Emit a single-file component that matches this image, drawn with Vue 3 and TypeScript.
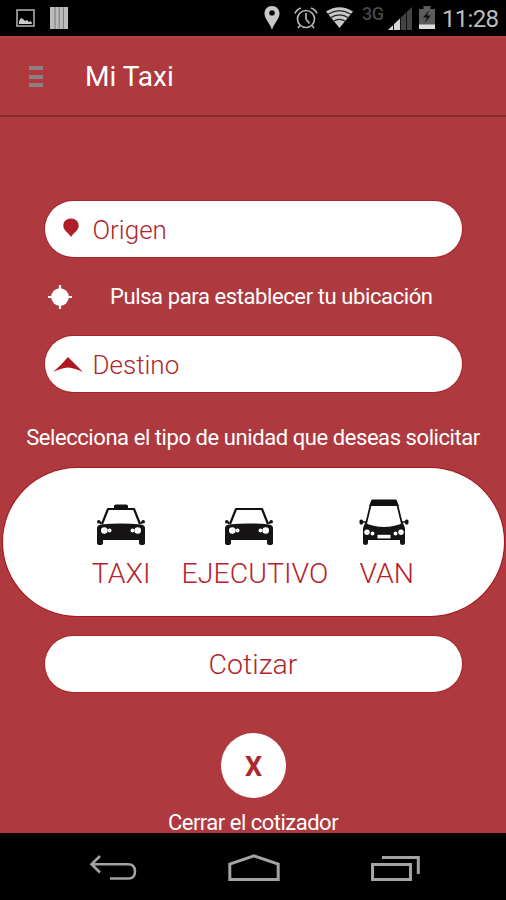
<script setup lang="ts">
interface Unit {
  id: 'taxi' | 'exec' | 'van'
  label: string
}

const units: Unit[] = [
  { id: 'taxi', label: 'TAXI' },
  { id: 'exec', label: 'EJECUTIVO' },
  { id: 'van', label: 'VAN' },
]
</script>

<template>
  <div class="screen">
    <div class="status">
      <svg class="s-image" width="19" height="18" viewBox="0 0 19 18">
        <rect x="1" y="1" width="17" height="16" fill="none" stroke="#aaa" stroke-width="1.6" />
        <path d="M3 15v-3l2-3 2 1 2 2 2-1 2 2 2-1 1 3z" fill="#ccc" />
      </svg>
      <svg class="s-bars" width="18" height="22" viewBox="0 0 18 22">
        <rect width="18" height="22" fill="#bcbcbc" />
        <path d="M5 0v22M9.2 0v22M13.4 0v22" stroke="#777" stroke-width="1" />
      </svg>
      <svg class="s-pin" width="16" height="24" viewBox="0 0 16 24">
        <path fill="#c8c8c8" fill-rule="evenodd" d="M8 0C3.5 0 .5 3.300.5 7.500.5 13 6 17 8 24 10 17 15.500 13 15.500 7.500 15.500 3.300 12.500 0 8 0zM8 4.200a2.700 2.700 0 1 1 0 5.400 2.700 2.700 0 0 1 0-5.400z" />
      </svg>
      <svg class="s-alarm" width="24" height="22" viewBox="0 0 24 22" fill="none" stroke="#b5b5b5" stroke-width="1.700">
        <circle cx="12" cy="12" r="8.500" />
        <path d="M12 6v6l3.500 4.500M1 6.500Q2.500 2.500 7 1M23 6.500Q21.500 2.500 17 1M6 18.500l-2 2.500M18 18.500l2 2.500" />
      </svg>
      <svg class="s-wifi" width="27" height="21" viewBox="0 0 27 21">
        <path d="M0 4.500Q13.500-4 27 4.500L13.500 21z" fill="#c8c8c8" />
        <path d="M2 7.200Q13.500 0 25 7.200M4.500 10.800Q13.500 5 22.500 10.800M7.500 14.300Q13.500 10.500 19.500 14.300" fill="none" stroke="#222" stroke-width="1.100" />
      </svg>
      <span class="s-net">3G</span>
      <svg class="s-signal" width="24" height="23" viewBox="0 0 24 23">
        <path d="M0 23L24 0v23z" fill="#444" />
        <path d="M0 23L12 11.500V23z" fill="#d5d5d5" />
        <path d="M5.500 17v6M12.500 10v13M18.500 4v19" stroke="#111" stroke-width="1" />
      </svg>
      <svg class="s-battery" width="16" height="23" viewBox="0 0 16 23">
        <path d="M4.500 0h7v3H16v20H0V3h4.500z" fill="#5c5c5c" />
        <path d="M0 18.500h16V23H0z" fill="#ddd" />
        <path d="M10.500 4L4 11.500h4L5.500 17 12 9.500H8z" fill="#111" />
      </svg>
      <span class="s-time">11:28</span>
    </div>

    <header class="bar">
      <span class="menu"><i></i><i></i><i></i></span>
      <h1>Mi Taxi</h1>
    </header>

    <main class="content">
      <div class="pill field">
        <svg class="f-icon" width="30" height="22" viewBox="0 0 30 22">
          <path d="M18 .5C13.500.5 10.300 3.600 10.300 7.700 10.300 12.800 16 15 18 19 20 15 25.700 12.800 25.700 7.700 25.700 3.600 22.500.5 18 .5z" fill="#ae1f27" />
        </svg>
        <span>Origen</span>
      </div>

      <div class="locate">
        <svg width="24" height="26" viewBox="0 0 24 26">
          <circle cx="12" cy="13" r="8.800" fill="#fff" />
          <path d="M12 1v24M0 13h24" stroke="#fff" stroke-width="2.200" />
        </svg>
        <span>Pulsa para establecer tu ubicación</span>
      </div>

      <div class="pill field">
        <svg class="f-icon" width="30" height="22" viewBox="0 0 30 22">
          <path d="M15 4L30 19Q22 15 15 14.500 8 15 0 19 8 12.500 15 4z" fill="#ae1720" />
        </svg>
        <span>Destino</span>
      </div>

      <p class="prompt">Selecciona el tipo de unidad que deseas solicitar</p>

      <div class="units">
        <div v-for="u in units" :key="u.id" class="unit" :class="u.id">
          <svg width="50" height="48" viewBox="0 0 50 48">
            <template v-if="u.id !== 'van'">
              <path v-if="u.id === 'taxi'" d="M18 11.500V9q0-1.500 2-1.500h10q2 0 2 1.500v2.500z" fill="#111" />
              <path d="M6 27L12 12H38L44 27" fill="none" stroke="#111" stroke-width="2.200" stroke-linejoin="round" />
              <path d="M1 31Q1 28 5 27.500 25 25.500 45 27.500 49 28 49 31V46q0 2-3 2t-3-2V43H7v3q0 2-3 2t-3-2z" fill="#151313" />
              <path d="M2.500 24.500l3 2M47.500 24.500l-3 2" stroke="#111" stroke-width="2" />
              <circle cx="2.800" cy="24.800" r="1.800" fill="#111" />
              <circle cx="47.200" cy="24.800" r="1.800" fill="#111" />
              <g fill="#fff">
                <circle cx="8.300" cy="33.500" r="3.300" />
                <circle cx="13.500" cy="33.500" r="2" />
                <circle cx="36.500" cy="33.500" r="2" />
                <circle cx="41.700" cy="33.500" r="3.300" />
              </g>
            </template>
            <template v-else>
              <path d="M11.500 8.500L7 27M38.500 8.500L43 27" stroke="#111" stroke-width="1.800" />
              <path d="M12 4q0-1.500 1.500-1.500h23Q38 2.500 38 4l2 5H10z" fill="#111" />
              <path d="M6 26Q25 34 44 26l2 5V46q0 2-2.500 2T41 46V43H9v3q0 2-2.500 2T4 46V31z" fill="#151313" />
              <path d="M2 25h5M43 25h5" stroke="#111" stroke-width="1.500" />
              <rect x=".5" y="22.500" width="3.500" height="5" rx="1.500" fill="#111" />
              <rect x="46" y="22.500" width="3.500" height="5" rx="1.500" fill="#111" />
              <g fill="#fff">
                <circle cx="8" cy="35.200" r="2.700" />
                <circle cx="13.500" cy="36.500" r="1.900" />
                <circle cx="36.500" cy="36.500" r="1.900" />
                <circle cx="42" cy="35.200" r="2.700" />
                <rect x="18.500" y="37.800" width="13" height="3.600" />
              </g>
            </template>
          </svg>
          <span>{{ u.label }}</span>
        </div>
      </div>

      <button class="pill quote">Cotizar</button>
      <button class="close">X</button>
      <p class="close-label">Cerrar el cotizador</p>
    </main>

    <nav class="nav">
      <svg width="48" height="28" viewBox="0 0 48 28" fill="none" stroke="#a3a3a3" stroke-width="2.600">
        <path d="M11 2L2.500 10.300 11 18.500M2.500 10.300H39Q46 10.300 46 17.500T39 24.500H21" />
      </svg>
      <svg width="52" height="28" viewBox="0 0 52 28" fill="none" stroke="#a3a3a3" stroke-width="3">
        <path d="M1.800 25.500V10L26 1.800 50.200 10V25.500z" />
      </svg>
      <svg width="49" height="28" viewBox="0 0 49 28" fill="none" stroke="#a3a3a3" stroke-width="3">
        <path d="M1.500 10.500h38v15h-38zM11 3.500H47.300V20" />
      </svg>
    </nav>
  </div>
</template>

<style>
body {
  margin: 0;
  background: #000;
}
</style>

<style scoped>
.screen {
  width: 506px;
  height: 900px;
  display: flex;
  flex-direction: column;
  overflow: hidden;
  background: #ae393f;
  color: #fff;
  font-family: Roboto, "Liberation Sans", sans-serif;
}
svg {
  display: block;
  flex: none;
}
h1,
p {
  margin: 0;
  font-weight: 400;
  white-space: nowrap;
}
button {
  border: 0;
  padding: 0;
  font-family: inherit;
}
.status {
  height: 36px;
  flex: none;
  display: flex;
  align-items: flex-start;
  background: #000;
  box-sizing: border-box;
  padding-left: 16px;
}
.s-image { margin-top: 9px; }
.s-bars { margin: 7px 0 0 15px; }
.s-pin { margin: 6px 0 0 196px; }
.s-alarm { margin: 7px 0 0 14px; }
.s-wifi { margin: 7px 0 0 8px; }
.s-net {
  width: 24px;
  margin: 3px 0 0 9px;
  font-size: 18px;
  font-weight: 500;
  line-height: 21px;
  letter-spacing: -0.5px;
  color: #484848;
}
.s-signal { margin: 7px 0 0 2px; }
.s-battery { margin: 6px 0 0 7px; }
.s-time {
  margin: 4px 0 0 7px;
  font-size: 24px;
  line-height: 30px;
  letter-spacing: -0.7px;
  color: #bdbdbd;
}
.bar {
  height: 81px;
  flex: none;
  box-sizing: border-box;
  border-top: 2px solid #b94046;
  border-bottom: 2px solid #822a2e;
  display: flex;
  align-items: center;
  padding-left: 29px;
}
.menu {
  width: 14px;
  display: flex;
  flex-direction: column;
  gap: 4.500px;
}
.menu i {
  height: 4px;
  background: #8d7f83;
}
.bar h1 {
  margin-left: 42px;
  font-size: 28px;
  line-height: 36px;
}
.content {
  flex: 1;
  min-height: 0;
  display: flex;
  flex-direction: column;
  align-items: center;
  padding-top: 84px;
}
.pill {
  width: 417px;
  height: 56px;
  flex: none;
  box-sizing: border-box;
  border-radius: 28px;
  background: #fff;
  color: #ae272e;
  box-shadow: 0 0 0 1px #a9252c;
}
.field {
  display: flex;
  align-items: center;
  padding-left: 8px;
  font-size: 26px;
  font-weight: 300;
}
.field span { margin-left: 10px; padding-top: 1px; }
.locate {
  width: 506px;
  height: 79px;
  flex: none;
  box-sizing: border-box;
  padding-left: 48px;
  display: flex;
  align-items: center;
  font-size: 22px;
  letter-spacing: -0.4px;
  white-space: nowrap;
}
.locate span { margin-left: 38px; }
.prompt {
  flex: none;
  margin-top: 32px;
  font-size: 22px;
  line-height: 28px;
  letter-spacing: -0.43px;
}
.units {
  width: 501px;
  height: 148px;
  flex: none;
  margin-top: 16px;
  box-sizing: border-box;
  border-radius: 74px;
  background: #fff;
  box-shadow: 0 0 0 1px #a9151c;
  display: flex;
  justify-content: center;
  gap: 31px;
  padding-top: 29px;
}
.unit {
  display: flex;
  flex-direction: column;
  align-items: center;
  gap: 12px;
  color: #b5242b;
  font-size: 28.500px;
  font-weight: 300;
  line-height: 34px;
}
.exec svg { margin-right: 11px; }
.van svg { margin-right: 5px; }
.quote {
  margin-top: 20px;
  font-size: 28.500px;
  font-weight: 300;
}
.close {
  width: 65px;
  height: 65px;
  flex: none;
  margin-top: 41px;
  padding: 2px 0 0 1px;
  border-radius: 50%;
  background: #fff;
  color: #ae272e;
  font-size: 27px;
  font-weight: 700;
}
.close-label {
  flex: none;
  margin-top: 11px;
  font-size: 22px;
  line-height: 28px;
  letter-spacing: -0.5px;
}
.nav {
  height: 67px;
  flex: none;
  box-sizing: border-box;
  display: flex;
  justify-content: space-between;
  padding: 21px 86px 0 89px;
  background: #000;
}
</style>
